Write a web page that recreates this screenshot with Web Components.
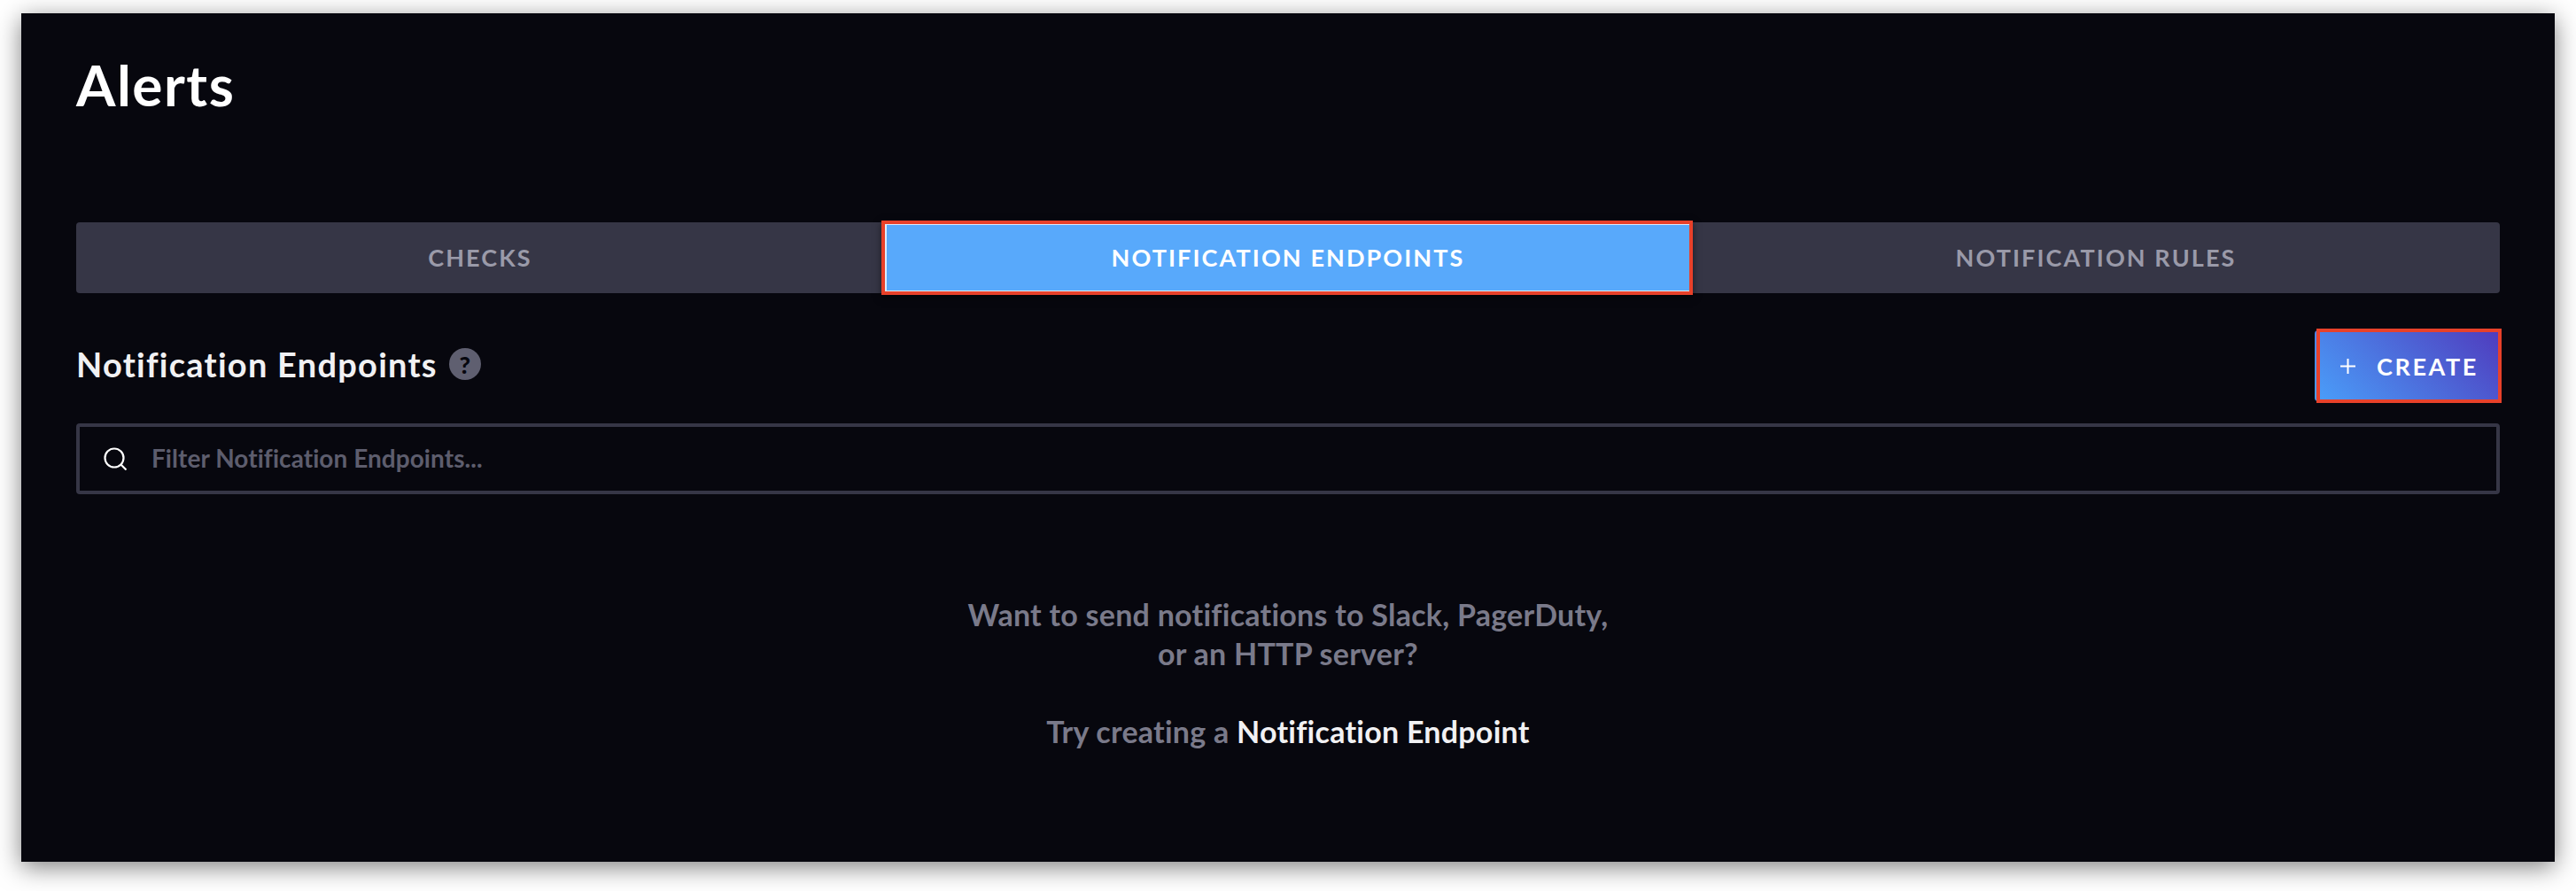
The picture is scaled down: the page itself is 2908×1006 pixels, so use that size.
<!DOCTYPE html>
<html lang="en">
<head>
<meta charset="utf-8">
<title>Alerts</title>
<style>
html, body { margin: 0; background: #fff; }
body { font-family: Lato, "Open Sans", sans-serif; width: 2908px; height: 1006px; overflow: hidden; }
</style>
</head>
<body>

<alerts-page>
	<page-title slot="title">Alerts</page-title>
	<tab-strip slot="tabs">
		<tab-item>CHECKS</tab-item>
		<tab-item selected marked>NOTIFICATION ENDPOINTS</tab-item>
		<tab-item>NOTIFICATION RULES</tab-item>
	</tab-strip>
	<section-head slot="head">
		Notification Endpoints
		<create-button slot="action">CREATE</create-button>
	</section-head>
	<filter-input slot="filter" placeholder="Filter Notification Endpoints..."></filter-input>
	<empty-state slot="empty">
		<p>Want to send notifications to Slack, PagerDuty,<br>or an HTTP server?</p>
		<p>Try creating a <light-text>Notification Endpoint</light-text></p>
	</empty-state>
</alerts-page>

<script>
function shadow(el, html) {
	el.attachShadow({mode: 'open'}).innerHTML = html;
}

class AlertsPage extends HTMLElement {
	constructor() {
		super();
		shadow(this, `
			<style>
				:host { display: block; box-sizing: border-box; width: 2860px; height: 958px; margin: 15px 24px 0;
					padding: 0 62px; background: #07070e; box-shadow: 0 6px 26px rgba(0,0,0,.5); }
			</style>
			<slot name="title"></slot>
			<slot name="tabs"></slot>
			<slot name="head"></slot>
			<slot name="filter"></slot>
			<slot name="empty"></slot>
		`);
	}
}

class PageTitle extends HTMLElement {
	constructor() {
		super();
		shadow(this, `
			<style>
				:host { display: block; height: 236px; padding-top: 43px; box-sizing: border-box;
					color: #fff; font-size: 64px; font-weight: 700; line-height: 76px; letter-spacing: 1.5px; }
			</style>
			<slot></slot>
		`);
	}
}

class TabStrip extends HTMLElement {
	constructor() {
		super();
		shadow(this, `
			<style>
				:host { display: grid; grid-template-columns: repeat(3, 1fr); height: 80px; border-radius: 4px; background: #363646; }
			</style>
			<slot></slot>
		`);
	}
}

class TabItem extends HTMLElement {
	constructor() {
		super();
		shadow(this, `
			<style>
				:host { display: flex; align-items: center; justify-content: center; position: relative; padding-bottom: 2px; box-sizing: border-box;
					color: #9a9aa9; font-size: 27px; font-weight: 700; letter-spacing: 2.1px; }
				:host([selected]) { background: #58a9fb; color: #fff; box-shadow: inset 0 0 0 3px #d9ecfe; }
				:host([marked])::after { content: ""; position: absolute; left: -3px; right: -1px; top: -2px; bottom: -2px;
					border: 4px solid #e8412a; box-shadow: 0 3px 8px rgba(0,0,0,.5); }
			</style>
			<slot></slot>
		`);
	}
}

class SectionHead extends HTMLElement {
	constructor() {
		super();
		shadow(this, `
			<style>
				:host { display: flex; align-items: center; height: 147px; padding: 42px 0 25px; box-sizing: border-box; }
				h2 { display: flex; align-items: center; gap: 13px; flex: 1; margin: 0 0 4px; color: #f1f1f3; font-size: 38px; font-weight: 700; letter-spacing: 1.25px; }
				.help { width: 36px; height: 36px; border-radius: 50%; background: #5f5f70; color: #07070e; letter-spacing: 0;
					display: flex; align-items: center; justify-content: center; font-size: 27px; font-weight: 900; }
			</style>
			<h2><slot></slot><span class="help">?</span></h2>
			<slot name="action"></slot>
		`);
	}
}

class CreateButton extends HTMLElement {
	constructor() {
		super();
		shadow(this, `
			<style>
				:host { display: flex; align-items: center; position: relative; box-sizing: border-box; width: 209px; height: 80px;
					padding-left: 29px; gap: 24px; border-radius: 4px; background: linear-gradient(45deg, #4a9ffa, #4f3bbd);
					color: #fff; font-size: 27px; font-weight: 700; letter-spacing: 2.6px; }
				:host::after { content: ""; position: absolute; left: 2px; right: -2px; top: -2px; bottom: -2px; border: 4px solid #e8412a; }
				svg { width: 17px; height: 17px; }
			</style>
			<svg viewBox="0 0 17 17"><path d="M8.5 0v17M0 8.5h17" stroke="#fff" stroke-width="2" fill="none"/></svg>
			<slot></slot>
		`);
	}
}

class FilterInput extends HTMLElement {
	constructor() {
		super();
		shadow(this, `
			<style>
				:host { display: flex; align-items: center; box-sizing: border-box; height: 80px; padding-left: 27px; gap: 28px;
					border: 4px solid #363646; border-radius: 4px; }
				svg { width: 26px; height: 26px; }
				span { color: #5d5d6d; font-size: 28px; font-weight: 700; padding-bottom: 2px; letter-spacing: .05px; }
			</style>
			<svg viewBox="0 0 26 26" fill="none" stroke="#fff" stroke-width="2.2"><circle cx="12" cy="12" r="10.5"/><path d="M19.5 19.5l6 6"/></svg>
			<span></span>
		`);
		this.shadowRoot.querySelector('span').textContent = this.getAttribute('placeholder');
	}
}

class EmptyState extends HTMLElement {
	constructor() {
		super();
		shadow(this, `
			<style>
				:host { display: block; padding-top: 114px; text-align: center; color: #7a7a8a; font-size: 34px; font-weight: 700; line-height: 44px; letter-spacing: .25px; }
				::slotted(p) { margin: 0 0 44px; }
			</style>
			<slot></slot>
		`);
	}
}

class LightText extends HTMLElement {
	constructor() {
		super();
		shadow(this, `
			<style>
				:host { display: inline; color: #f1f1f3; }
			</style>
			<slot></slot>
		`);
	}
}

customElements.define('alerts-page', AlertsPage);
customElements.define('page-title', PageTitle);
customElements.define('tab-strip', TabStrip);
customElements.define('tab-item', TabItem);
customElements.define('section-head', SectionHead);
customElements.define('create-button', CreateButton);
customElements.define('filter-input', FilterInput);
customElements.define('empty-state', EmptyState);
customElements.define('light-text', LightText);
</script>
</body>
</html>
